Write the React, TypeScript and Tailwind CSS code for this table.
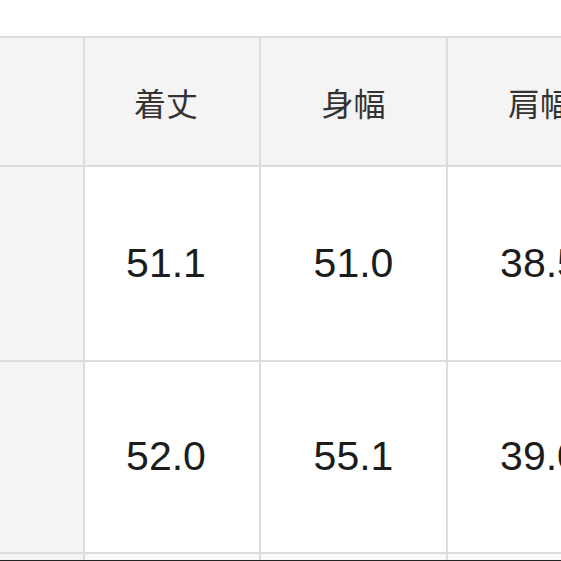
const headers = ["着丈", "身幅", "肩幅"];

const rows = [
  ["51.1", "51.0", "38.5"],
  ["52.0", "55.1", "39.0"],
];

const cjk = { fontFamily: '"Noto Sans CJK JP", "Noto Sans", sans-serif' };
const num = { fontFamily: '"Liberation Sans", Arial, sans-serif' };

export default function App() {
  return (
    <div className="w-[561px] h-[561px] overflow-hidden bg-white">
      <div className="h-[560px] overflow-hidden pt-[36px]">
        <div className="grid grid-cols-[83px_174px_185px_184px] grid-rows-[127px_193px_190px_40px] gap-[2px] border-t-2 border-[#dcdcde] bg-[#dcdcde] w-[632px]">
          <div className="bg-[#f4f4f5]" />
          {headers.map((h, i) => (
            <div
              key={h}
              style={cjk}
              className={`bg-[#f4f4f5] flex items-center justify-center text-[32px] text-[#333] ${i === 0 ? "pr-[12px]" : ""}`}
            >
              {h}
            </div>
          ))}
          {rows.map((r, ri) => (
            <div key={ri} className="contents">
              <div className="bg-[#f4f4f5]" />
              {r.map((v, i) => (
                <div
                  key={i}
                  style={num}
                  className={`bg-white flex items-center justify-center text-[41px] text-[#1c1c1c] ${i === 0 ? "pr-[12px]" : ""}`}
                >
                  {v}
                </div>
              ))}
            </div>
          ))}
          <div className="bg-[#f4f4f5]" />
          <div className="bg-[#fafafa]" />
          <div className="bg-[#fafafa]" />
          <div className="bg-[#fafafa]" />
        </div>
      </div>
      <div className="h-[1px] bg-[#222]" />
    </div>
  );
}
